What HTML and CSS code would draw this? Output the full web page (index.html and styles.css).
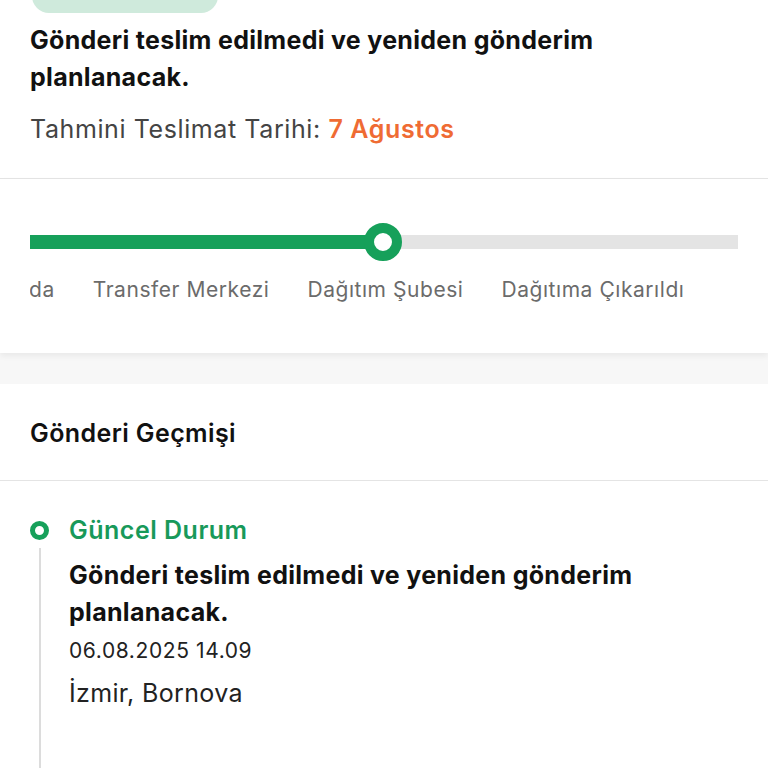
FILE: index.html
```html
<!DOCTYPE html>
<html lang="tr">
<head>
<meta charset="utf-8">
<link rel="stylesheet" href="styles.css">
</head>
<body>
<section class="card summary">
  <div class="badge"></div>
  <h1 class="title">Gönderi teslim edilmedi ve yeniden gönderim planlanacak.</h1>
  <p class="eta">Tahmini Teslimat Tarihi: <span class="eta-date">7 Ağustos</span></p>
</section>
<section class="card progress">
  <div class="track">
    <div class="track-fill" style="width:353px"></div>
    <div class="track-knob"></div>
  </div>
  <div class="labels">
    <div class="labels-inner">
      <span class="label first">Yolda</span>
      <span class="label">Transfer Merkezi</span>
      <span class="label">Dağıtım Şubesi</span>
      <span class="label">Dağıtıma Çıkarıldı</span>
    </div>
  </div>
</section>
<section class="card history">
  <h2 class="history-title">Gönderi Geçmişi</h2>
  <div class="timeline">
    <div class="event">
      <div class="event-head">
        <span class="dot"></span>
        <span class="event-status">Güncel Durum</span>
      </div>
      <div class="event-body">
        <p class="event-text">Gönderi teslim edilmedi ve yeniden gönderim planlanacak.</p>
        <p class="event-date">06.08.2025 14.09</p>
        <p class="event-place">İzmir, Bornova</p>
      </div>
    </div>
  </div>
</section>
</body>
</html>
```
FILE: styles.css
```css
* { box-sizing: border-box; }
html, body { margin: 0; padding: 0; }
body {
  background: #f7f7f7;
  font-family: Inter, "Noto Sans", sans-serif;
  color: #111;
  width: 768px;
  height: 768px;
  overflow: hidden;
}
p, h1, h2 { margin: 0; }
.card { background: #fff; }
.summary {
  display: flow-root;
  padding: 0 30px 0 30px;
  border-bottom: 1px solid #e4e4e4;
  height: 179px;
}
.badge {
  width: 186px;
  height: 34px;
  margin-left: 2px;
  margin-top: -21px;
  border-radius: 17px;
  background: #cfeadc;
}
.title {
  margin-top: 9px;
  font-size: 25px;
  letter-spacing: 0.3px;
  line-height: 37px;
  font-weight: 700;
  color: #111;
  width: 640px;
}
.eta {
  margin-top: 18px;
  font-size: 25px;
  letter-spacing: 0.6px;
  line-height: 30px;
  color: #444;
}
.eta-date { color: #ef6b33; font-weight: 600; }
.progress {
  height: 174px;
  padding-top: 56px;
  box-shadow: 0 3px 6px rgba(0,0,0,0.06);
  position: relative;
}
.track {
  position: relative;
  margin: 0 30px;
  height: 14px;
  background: #e4e4e4;
}
.track-fill { height: 14px; background: #16a05a; }
.track-knob {
  position: absolute;
  left: 334px;
  top: -12px;
  width: 38px;
  height: 38px;
  border-radius: 50%;
  background: #fff;
  border: 10px solid #16a05a;
}
.labels {
  margin: 28px 0 0 30px;
  overflow: hidden;
  white-space: nowrap;
}
.labels-inner { display: flex; gap: 38px; }
.label {
  font-size: 21px;
  letter-spacing: 0.55px;
  line-height: 26px;
  color: #6b6b6b;
  flex: none;
}
.label.first { margin-left: -33px; }
.history { margin-top: 31px; }
.history-title {
  font-size: 25px;
  letter-spacing: 0.4px;
  font-weight: 600;
  line-height: 28px;
  padding: 35px 30px 33px;
  border-bottom: 1px solid #e4e4e4;
  color: #111;
}
.timeline { padding: 34px 30px 0 30px; }
.event-head {
  display: flex;
  align-items: center;
  gap: 20px;
  height: 30px;
}
.dot {
  width: 19px;
  height: 19px;
  border-radius: 50%;
  border: 5px solid #16a05a;
  flex: none;
}
.event-status {
  font-size: 25px;
  letter-spacing: 0.5px;
  font-weight: 600;
  color: #18995a;
  line-height: 30px;
}
.event-body {
  margin-left: 9px;
  margin-top: 3px;
  border-left: 2px solid #dcdcdc;
  padding: 9px 0 120px 28px;
}
.event-text {
  font-size: 25px;
  letter-spacing: 0.3px;
  font-weight: 700;
  line-height: 37px;
  width: 640px;
}
.event-date {
  margin-top: 7px;
  font-size: 21px;
  letter-spacing: 0.6px;
  line-height: 26px;
  color: #222;
}
.event-place {
  margin-top: 14px;
  font-size: 25px;
  letter-spacing: 0.35px;
  line-height: 30px;
  color: #222;
}
```
